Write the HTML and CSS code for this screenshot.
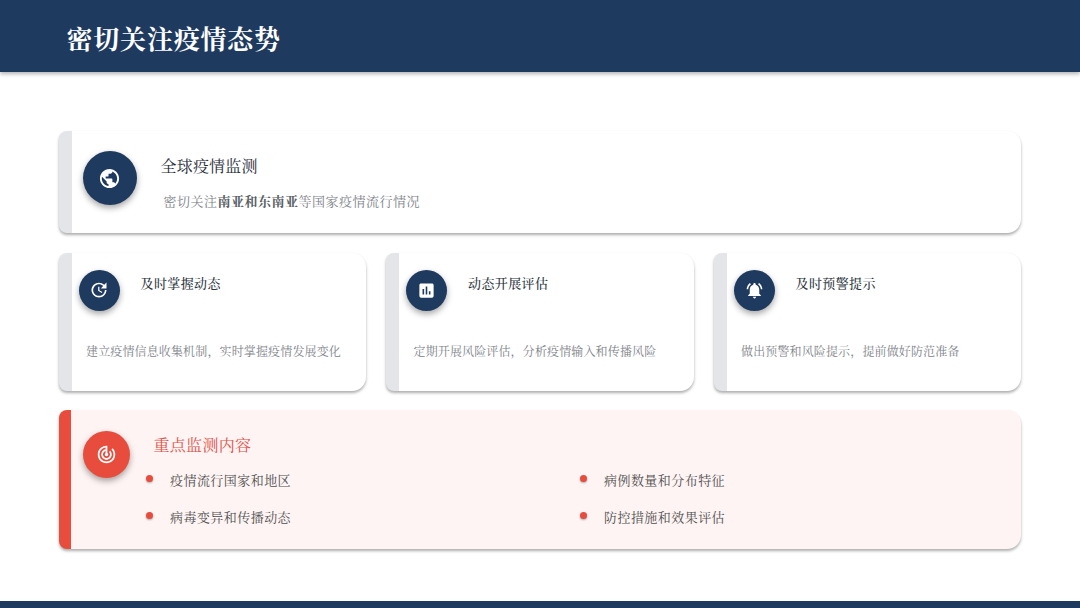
FILE: index.html
```html
<!DOCTYPE html>
<html lang="zh-CN">
<head>
<meta charset="utf-8">
<title>密切关注疫情态势</title>
<link rel="stylesheet" href="styles.css">
</head>
<body>
<div class="slide">
  <header class="top"><h1>密切关注疫情态势</h1></header>
  <main class="content">
    <section class="card wide">
      <div class="circle c54"><svg viewBox="0 0 24 24" width="23" height="23"><path fill="#fff" d="M12 2C6.480 2 2 6.480 2 12s4.480 10 10 10 10-4.480 10-10S17.520 2 12 2zm-1 17.930c-3.950-.490-7-3.850-7-7.930 0-.620.080-1.210.210-1.790L9 15v1c0 1.100.900 2 2 2v1.930zm6.900-2.540c-.260-.810-1-1.390-1.900-1.390h-1v-3c0-.550-.450-1-1-1H8v-2h2c.550 0 1-.450 1-1V7h2c1.100 0 2-.900 2-2v-.410c2.930 1.190 5 4.060 5 7.410 0 2.080-.800 3.970-2.100 5.390z"/></svg></div>
      <div class="wide-text">
        <h2 class="t16">全球疫情监测</h2>
        <p class="sub">密切关注<b>南亚和东南亚</b>等国家疫情流行情况</p>
      </div>
    </section>
    <section class="row">
      <article class="card small">
        <div class="small-head">
          <div class="circle c41"><svg viewBox="0 0 24 24" width="20" height="20"><path fill="#fff" d="M21 10.120h-6.780l2.740-2.820c-2.730-2.700-7.150-2.800-9.880-.100-2.730 2.710-2.730 7.080 0 9.790s7.150 2.710 9.880 0C18.320 15.650 19 14.080 19 12.100h2c0 1.980-.880 4.550-2.640 6.290-3.510 3.480-9.210 3.480-12.720 0-3.500-3.470-3.530-9.110-.020-12.580s9.140-3.470 12.650 0L21 3v7.120zM12.500 8v4.250l3.500 2.080-.720 1.210L11 13V8h1.500z"/></svg></div>
          <h3>及时掌握动态</h3>
        </div>
        <p class="desc">建立疫情信息收集机制，实时掌握疫情发展变化</p>
      </article>
      <article class="card small">
        <div class="small-head">
          <div class="circle c41"><svg viewBox="0 0 24 24" width="19" height="19"><path fill="#fff" d="M19 3H5c-1.100 0-2 .900-2 2v14c0 1.100.900 2 2 2h14c1.100 0 2-.900 2-2V5c0-1.100-.900-2-2-2zM9 17H7v-7h2v7zm4 0h-2V7h2v10zm4 0h-2v-4h2v4z"/></svg></div>
          <h3>动态开展评估</h3>
        </div>
        <p class="desc">定期开展风险评估，分析疫情输入和传播风险</p>
      </article>
      <article class="card small">
        <div class="small-head">
          <div class="circle c41"><svg viewBox="0 0 24 24" width="19" height="19"><path fill="#fff" d="M7.580 4.080L6.150 2.650C3.750 4.480 2.170 7.300 2.030 10.500h2c.150-2.650 1.510-4.970 3.550-6.420zm12.390 6.420h2c-.150-3.200-1.730-6.020-4.120-7.850l-1.420 1.430c2.020 1.450 3.390 3.770 3.540 6.420zM18 11c0-3.070-1.640-5.640-4.500-6.320V4c0-.830-.670-1.500-1.500-1.500s-1.500.670-1.500 1.500v.680C7.630 5.360 6 7.920 6 11v5l-2 2v1h16v-1l-2-2v-5zm-6 11c.140 0 .270-.010.400-.040.650-.140 1.180-.580 1.440-1.180.100-.240.150-.500.150-.780h-4c.010 1.100.900 2 2.010 2z"/></svg></div>
          <h3>及时预警提示</h3>
        </div>
        <p class="desc">做出预警和风险提示，提前做好防范准备</p>
      </article>
    </section>
    <section class="card focus">
      <div class="circle c47"><svg viewBox="0 0 24 24" width="21" height="21"><path fill="#fff" d="M19.070 4.930l-1.410 1.410C19.100 7.790 20 9.790 20 12c0 4.420-3.580 8-8 8s-8-3.580-8-8c0-4.080 3.050-7.440 7-7.930v2.020C8.160 6.570 6 9.030 6 12c0 3.310 2.690 6 6 6s6-2.690 6-6c0-1.660-.670-3.160-1.760-4.240l-1.410 1.410C15.550 9.900 16 10.900 16 12c0 2.210-1.790 4-4 4s-4-1.790-4-4c0-1.860 1.280-3.410 3-3.860v2.140c-.600.350-1 .980-1 1.720 0 1.100.900 2 2 2s2-.900 2-2c0-.740-.400-1.380-1-1.720V2h-1C6.480 2 2 6.480 2 12s4.480 10 10 10 10-4.480 10-10c0-2.760-1.120-5.260-2.930-7.070z"/></svg></div>
      <div class="focus-body">
        <h2 class="t16 red">重点监测内容</h2>
        <ul class="points">
          <li>疫情流行国家和地区</li>
          <li>病例数量和分布特征</li>
          <li>病毒变异和传播动态</li>
          <li>防控措施和效果评估</li>
        </ul>
      </div>
    </section>
  </main>
  <footer class="bottom"></footer>
</div>
</body>
</html>
```
FILE: styles.css
```css
* { box-sizing: border-box; margin: 0; padding: 0; }
html, body { width: 1080px; height: 608px; overflow: hidden; background: #fff; }
body { font-family: "Noto Serif CJK SC", "Liberation Serif", serif; color: #333; }
.slide { width: 1080px; height: 608px; display: flex; flex-direction: column; }
.top { height: 72px; flex: none; background: #1e3a5f; box-shadow: 0 2px 4px rgba(0,0,0,.3); padding: 2px 0 0 66.500px; display: flex; align-items: center; }
.top h1 { font-size: 26px; letter-spacing: .8px; font-weight: 700; color: #fff; }
.content { flex: 1; padding: 59px 59px 0 58.500px; display: flex; flex-direction: column; gap: 19.500px; }
.card { background: #fff; border-left: 13.500px solid #e3e5e9; border-radius: 8px 14px 14px 8px; box-shadow: 0 2px 3px rgba(0,0,0,.32); display: flex; }
.wide { height: 102px; padding: 20px 0 0 11px; gap: 24px; }
.circle { border-radius: 50%; background: #1e3a5f; flex: none; display: flex; align-items: center; justify-content: center; box-shadow: 0 3px 6px rgba(0,0,0,.35); }
.c54 { width: 54px; height: 54px; }
.c41 { width: 41px; height: 41px; }
.c47 { width: 47px; height: 47px; background: #e74c3c; }
.wide-text { padding-top: 3px; }
.t16 { font-size: 16px; font-weight: 400; letter-spacing: .2px; color: #1f2a38; line-height: 24px; }
.sub { font-size: 13px; letter-spacing: .5px; color: #7d8288; line-height: 20px; margin: 13px 0 0 3px; }
.sub b { color: #5a5f66; font-weight: 700; }
.row { display: flex; gap: 20px; }
.small { flex: 1; height: 138px; flex-direction: column; padding: 17px 0 0 14.500px; }
.small-head { display: flex; gap: 21px; height: 41px; margin-left: -7.500px; }
.small h3 { font-size: 13px; font-weight: 500; letter-spacing: .4px; color: #2b3440; line-height: 26px; }
.desc { font-size: 12px; letter-spacing: .14px; color: #7d8288; line-height: 20px; margin-top: 30px; }
.focus { height: 139px; background: #fef4f3; border-left: 12.500px solid #e74c3c; padding: 21px 0 0 12px; gap: 24px; }
.focus-body { flex: 1; }
.red { color: #e2534a; margin-top: 2px; letter-spacing: .3px; }
.points { list-style: none; display: grid; grid-template-columns: 434px 1fr; row-gap: 17px; margin: 13px 0 0 -8px; }
.points li { font-size: 13px; letter-spacing: .45px; color: #4f4f4f; line-height: 20px; padding-left: 24.500px; position: relative; }
.points li::before { content: ""; position: absolute; left: 0; top: 5px; width: 7px; height: 7px; border-radius: 50%; background: #e74c3c; box-shadow: 0 1px 2px rgba(0,0,0,.3); }
.bottom { height: 7px; flex: none; background: #1e3a5f; }
```
